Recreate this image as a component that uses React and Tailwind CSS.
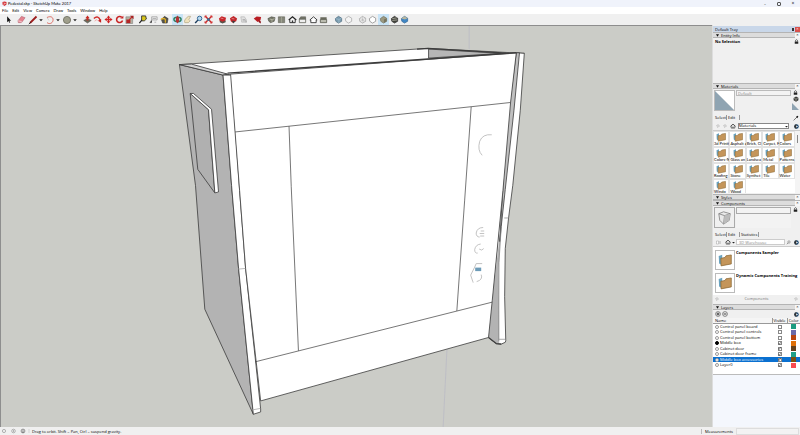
import { useState } from "react";

const menus = ["File", "Edit", "View", "Camera", "Draw", "Tools", "Window", "Help"];

const materials = [
  "3d Printi", "Asphalt a", "Brick, Cl", "Carpet, F", "Colors",
  "Colors-N", "Glass an", "Landsca", "Metal", "Patterns",
  "Roofing", "Stone", "Synthet", "Tile", "Water",
  "Windo", "Wood",
];

const startLayers = [
  { name: "Control panel board", visible: false, color: "bg-[#1b9c80]" },
  { name: "Control panel controls", visible: false, color: "bg-[#6a6aa8]" },
  { name: "Control panel bottom", visible: false, color: "bg-[#b8440e]" },
  { name: "Middle box", visible: true, color: "bg-[#e07008]" },
  { name: "Cabinet door", visible: true, color: "bg-[#64401c]" },
  { name: "Cabinet door frame", visible: true, color: "bg-[#1ea088]" },
  { name: "Middle box accessories", visible: true, color: "bg-[#7c5010]" },
  { name: "Layer0", visible: true, color: "bg-[#fa4a50]" },
];

// every glyph is drawn on a 10x10 grid
const icons = {
  select: <path d="M3.500 1.500v6.500l1.500-1.300 1 2 .9-.5-1-1.900h1.900z" fill="#111" />,
  eraser: <><path d="M1 6.500L5 1.500l4 1.500L5 8.500 1.500 8.500z" fill="#e5838f" stroke="#a35a66" strokeWidth=".5" /><path d="M1 6.500l3.800.7v1.300" fill="none" stroke="#fff" strokeWidth=".6" /></>,
  pencil: <><path d="M2 8L8.500 1.500" stroke="#9c1c1c" strokeWidth="1.800" /><path d="M.8 9.200l2-2" stroke="#222" strokeWidth=".9" /></>,
  arc: <><path d="M2 2.500c4-2 6.500 0 6 3S4 9.500 2 7.500" fill="none" stroke="#dd6a60" strokeWidth="1" /><path d="M2 2.500l2 3" stroke="#bbb" strokeWidth=".6" /></>,
  circle: <circle cx="5" cy="5" r="3.600" fill="#a09f8c" stroke="#6a6a5c" strokeWidth=".8" />,
  push: <><path d="M.8 6l4.200-2L9.200 6 5 9z" fill="#6d6b5a" stroke="#444" strokeWidth=".5" /><path d="M5 .6L2.600 3.500H4V6h2V3.500h1.400z" fill="#c82a22" /></>,
  follow: <><path d="M1 4c3-3 6-2 7 2" fill="none" stroke="#d02a28" strokeWidth="1.600" /><path d="M9 8.500L5.500 6.500 9 4.500z" fill="#c51f1f" /><path d="M2 7c1-2 2-2 3-1" fill="none" stroke="#e88" strokeWidth=".8" /></>,
  move: <path d="M5 .5L3 3h1.200v1.200H3V3L.5 5 3 7V5.800h1.200V7H3l2 2.500L7 7H5.800V5.800H7V7l2.500-2L7 3v1.200H5.800V3H7z" fill="#cf2323" />,
  rotate: <><path d="M7.500 2.500A3.400 3.400 0 1 0 8.400 6" fill="none" stroke="#c92323" strokeWidth="1.700" /><path d="M5.800 4L9.300 4V.8z" fill="#c92323" /></>,
  scale: <><path d="M1 2h7.500v7.500H1z" fill="#b5b2a2" stroke="#777" strokeWidth=".6" /><path d="M1.500 9h4.500V5h-4.500z" fill="#b32626" /><path d="M4.500 5.500L8 2" stroke="#c22" strokeWidth="1.200" /><path d="M5.500.8h4v4z" fill="#a52222" /></>,
  tape: <><path d="M4 1h4.500l.8 3.500-2.300 2H4z" fill="#d8c61c" stroke="#222" strokeWidth=".9" /><path d="M4.500 5.500L1.500 9" stroke="#222" strokeWidth="1.400" /></>,
  text: <><path d="M3 2h6v3.500H3z" fill="#f2f2f2" stroke="#777" strokeWidth=".6" /><path d="M4 3.800h4M3 5.500L1 8.500h2M6 8h2" stroke="#777" strokeWidth=".6" /></>,
  paint: <><path d="M1.500 5l3.500-3.500L9 4 8 9H3z" fill="#55544c" stroke="#333" strokeWidth=".6" /><path d="M1 5c2-1.500 4-1.500 5 0v3.500" fill="none" stroke="#dbac26" strokeWidth="1.500" /></>,
  orbit: <><ellipse cx="5" cy="5" rx="4" ry="2.400" fill="none" stroke="#2b8063" strokeWidth="1.600" /><path d="M5 .5L3.200 3v4L5 9.500 6.800 7V3z" fill="#b03335" /></>,
  hand: <path d="M2 8.500C1 6 2.500 5 4 3l2-1.500h2.500L6.500 5 8 6.500 6 8.500z" fill="#efe2bd" stroke="#a99d79" strokeWidth=".7" />,
  zoom: <><circle cx="6.200" cy="3.800" r="2.500" fill="#b8d8ee" stroke="#356a98" strokeWidth="1.100" /><path d="M4.300 5.700L1.300 9" stroke="#1c3c5c" strokeWidth="1.600" /></>,
  extents: <><path d="M1.500 1.500l7 7M8.500 1.500l-7 7" stroke="#cf2525" strokeWidth="1.600" /><circle cx="5" cy="5" r="1.700" fill="#3f6f92" /><path d="M1 3V1h2M7 1h2v2M9 7v2H7M3 9H1V7" fill="none" stroke="#cf2525" strokeWidth=".8" /></>,
  warehouse: <><path d="M1 4l3-2.500L9 3 8 7 5 9 2 7z" fill="#c7262a" /><path d="M2 6l3 1.500L8.500 6v2L5 9.400 2 8z" fill="#57544b" /><path d="M3 3.500l3 .5" stroke="#e99" strokeWidth=".8" /></>,
  extension: <><path d="M1 3.500L5 1.200 9 4 8 7 4 8.500 2 7z" fill="#c0262a" /><path d="M3 6.500L7 7l-2 2.400z" fill="#3f3f3f" /><path d="M3 4l3 .3" stroke="#f1b6b6" strokeWidth=".7" /></>,
  layout: <><path d="M2 2h4l2 3v3H3z" fill="#e1e1e1" stroke="#aaa" strokeWidth=".6" /><path d="M4 5h3M4 6.500h4v2" fill="none" stroke="#999" strokeWidth=".7" /></>,
  ruby: <><path d="M.8 4l3.200-2.200 5 .5L8.200 6 5 7.800z" fill="#b91d23" /><path d="M6 6l2.700 1v2.400L6.500 8z" fill="#8e1318" /></>,
  iso: <><path d="M1 4l4-2 4 1-1 4-4 1.500L2 7z" fill="#77796a" stroke="#414238" strokeWidth=".6" /><path d="M3 4.500l3 .7L8.500 4M5.500 5v3" fill="none" stroke="#d9d9c8" strokeWidth=".6" /></>,
  top: <><path d="M1.500 2h7v6.500h-7z" fill="#85877a" stroke="#555649" strokeWidth=".6" /><path d="M5 2v6.500" stroke="#b9baa8" strokeWidth=".6" /></>,
  house: <><path d="M2 5v3.500h6V5" fill="#fff" stroke="#222" strokeWidth="1" /><path d="M.8 5.500L5 2l4.200 3.500" fill="none" stroke="#222" strokeWidth="1.300" /><path d="M4.200 6h1.600v2.500H4.200z" fill="#333" /></>,
  side: <><path d="M1.500 4.500h7v4h-7z" fill="#eee" stroke="#55564c" strokeWidth=".8" /><path d="M1.500 4.500L3 2h5.500v2.500z" fill="#77786c" stroke="#44453c" strokeWidth=".5" /></>,
  back: <path d="M2 8.500V5.500H1L5 2l4 3.500H8v3z" fill="#fff" stroke="#333" strokeWidth="1" />,
  left: <><path d="M1.500 5h7v3.500h-7z" fill="#bbbcb0" stroke="#4b4c42" strokeWidth=".8" /><path d="M1.500 2.500h7V5h-7z" fill="#696a5c" /></>,
  xray: <><path d="M1.500 4L5 1.500l3.500 2v3.500L5 9 2 7z" fill="#7c9db0" stroke="#4e6c80" strokeWidth=".8" /><path d="M2 4l3.500 1 3-1.500M5.500 5v4" fill="none" stroke="#b6d0df" strokeWidth=".5" /></>,
  edges: <path d="M1.500 4L5 1.500l3.500 2v3.500L5 9 2 7z" fill="#f4f4f4" stroke="#a4a4a4" strokeWidth=".8" />,
  wire: <><path d="M1.500 4L5 1.500l3.500 2v3.500L5 9 2 7z" fill="none" stroke="#9a9a9a" strokeWidth=".7" /><path d="M2 4l3.500 1 3-1.500M5.500 5v4M5 1.500V6L2 7M5 6l3.500 1" fill="none" stroke="#aaa" strokeWidth=".5" /></>,
  hidden: <path d="M1.500 4L5 1.500l3.500 2v3.500L5 9 2 7z" fill="#fff" stroke="#858585" strokeWidth=".8" />,
  shaded: <><path d="M1.500 4L5 1.500l3.500 2v3.500L5 9 2 7z" fill="#9c9a82" stroke="#6e6d5a" strokeWidth=".7" /><path d="M5.500 5l3-1.500v3.500L5.500 9z" fill="#77755f" /></>,
  textured: <><path d="M1.500 4L5 1.500l3.500 2v3.500L5 9 2 7z" fill="#41423b" stroke="#222" strokeWidth=".7" /><path d="M2.500 4l5-.8M2.500 6l5.500-.5" stroke="#c3c3b5" strokeWidth=".8" /></>,
  mono: <><path d="M1.500 4L5 1.500l3.500 2v3.500L5 9 2 7z" fill="#3f86c4" stroke="#285c8c" strokeWidth=".7" /><path d="M1.500 4L5 1.500l3.500 2L5.500 5z" fill="#b9b79e" /></>,
  caret: <path d="M.5 3h9L5 8z" fill="#222" />,
  lock: <><path d="M1.500 5h7v4.500h-7z" fill="#222" /><path d="M3 5V2.800q2-3 4 0V5" fill="none" stroke="#333" strokeWidth="1.400" /></>,
  cube: <><path d="M1 3.500L5 1l4 2v4L5 9.500 1 7z" fill="#3a3b38" /><path d="M2 4l3 1 3-1.200M5 5v3.500" fill="none" stroke="#d5d5cc" strokeWidth=".8" /></>,
  dropper: <><path d="M1 9l5-5" stroke="#555" strokeWidth="1.300" /><path d="M5 3.500l2-2.300 2 1.500L7 5.500z" fill="#111" /></>,
  detail: <><circle cx="5" cy="5" r="4.500" fill="#1d4a73" /><path d="M5 .5a4.500 4.500 0 0 0 0 9z" fill="#333" /><path d="M4.500 3L8 5 4.500 7z" fill="#fff" /></>,
  back1: <path d="M5 1.500L1.500 5 5 8.500 8.500 5z" fill="none" stroke="#888" strokeWidth="1.200" />,
  search: <><circle cx="6" cy="4" r="2.400" fill="none" stroke="#555" strokeWidth=".9" /><path d="M4.300 5.700L1.800 8.500" stroke="#555" strokeWidth="1.200" /></>,
  list: <path d="M1 2h4v6H1zM6.500 3h3M6.500 5h3M6.500 7h3" fill="#fff" stroke="#888" strokeWidth=".8" />,
  plus: <><circle cx="5" cy="5" r="4" fill="#eee" stroke="#444" strokeWidth="1" /><path d="M5 2.800v4.400M2.800 5h4.400" stroke="#222" strokeWidth="1.400" /></>,
  minus: <><circle cx="5" cy="5" r="4" fill="#eee" stroke="#444" strokeWidth="1" /><path d="M2.800 5h4.400" stroke="#222" strokeWidth="1.400" /></>,
  folder: <><path d="M.5 2.200l2.500-.9V3L2.500 8.500.8 7.500z" fill="#6aa3c0" /><path d="M2 3.800l3-.6.7-1.200L9.500 1.400v6.400L2.200 9.200z" fill="#c4955a" stroke="#86642f" strokeWidth=".5" /></>,
};

function Icon({ name, className = "size-2.5" }) {
  return <svg viewBox="0 0 10 10" className={`${className} shrink-0`} aria-hidden="true">{icons[name]}</svg>;
}

function ToolGroup({ names, active, width, className = "" }) {
  return (
    <div className={`flex shrink-0 ${width} ${className}`}>
      {names.map((n) => (
        <button key={n} aria-label={n} className={`flex flex-1 h-[11px] min-w-0 items-center justify-center ${n === active ? "bg-[#c9e4f6]" : ""}`}>
          <Icon name={n} className="size-[9px]" />
        </button>
      ))}
    </div>
  );
}

function CaretTool({ name }) {
  return (
    <div className="flex items-center shrink-0 w-[17px] gap-px">
      <button aria-label={name}><Icon name={name} className="size-[10px]" /></button>
      <button aria-label={`${name} options`}><Icon name="caret" className="size-[4px]" /></button>
    </div>
  );
}

function PanelHeader({ title }) {
  return (
    <div className="flex items-center shrink-0 h-[6px] pl-[3px] border-y border-[#b4b4b4] bg-[#dcdcdc]">
      <button className="flex items-center flex-1 gap-0.5 text-left">
        <svg viewBox="0 0 10 10" className="size-[3px]" aria-hidden="true"><path d="M0 1h10L5 9z" fill="#111" /></svg>
        {title}
      </button>
      <button aria-label={`Close ${title}`} className="w-[5px] h-[5px] bg-[#f6f6f6] text-center leading-[4px]">×</button>
    </div>
  );
}

function Tabs({ names }) {
  return (
    <div className="flex items-center shrink-0 h-[7px] pl-0.5">
      {names.map((n, i) => (
        <button key={n} className={`pr-px mr-px border-r border-[#999] text-left ${i < 2 ? "w-[12px]" : ""}`}>{n}</button>
      ))}
    </div>
  );
}

function Cabinet() {
  return (
    <svg viewBox="1 26 710 400" className="w-full h-full" preserveAspectRatio="xMinYMin slice" role="img" aria-label="Pedestal model">
      <path d="M468 26v23M446 345l-4 82" stroke="#b5b6c4" strokeWidth=".6" />
      <g stroke="#3c3c3c" strokeWidth=".8" strokeLinejoin="round">
        {/* open top */}
        <path d="M179 64.500L416 49l11-.6L523 53.300 231 75z" fill="#fff" />
        <path d="M427.500 49v9L500 53.300z" fill="#b6b6b6" />
        <path d="M416 49l11-.6L505 53" fill="none" strokeWidth="1.300" />
        {/* left side */}
        <path d="M179 64.500L222.500 75 231 185l7 83 14.700 145.300L204.300 308.500 195 185z" fill="#b3b3b3" />
        <path d="M179 64.500l12-.5 36 10-4.500 1z" fill="#d2d2d2" />
        <path d="M222.500 75h8.500L239 190l6 78 10 93 5 47v3l-7.300 2.300L238 268l-7-83z" fill="#fff" />
        <path d="M238 268.500l7-.7M251.500 409l8-1.500" stroke="#aaa" />
        {/* side plate */}
        <path d="M189.700 93.300L208 109.500l6.300 83L197.300 169z" fill="#b0b0b0" />
        <path d="M189.700 93.300h3.300l18 15.700 7 82.500-3.700 1-6.300-83z" fill="#fff" />
        {/* right side */}
        <path d="M515 52.700l8 .6L519 110l-7.500 75-4.200 32.500L504 248l-.6 48 1.100 44-.5 1.500-4 1.800-5-.5-7.700-6L491 300l10-110z" fill="#fff" />
        <path d="M500 222l-2.500 45.500.5 74.500-3 .8-7.700-6.100 3.400-35z" fill="#b3b3b3" stroke="none" />
        <path d="M515 52.700h3.200L512.700 110 504 189l-4 37-1.500 15L505 130z" fill="#c0c0c0" />
        <path d="M500 226l-2.300 36-.2 78" fill="none" stroke="#888" />
        <path d="M503 217.500h4.300M497.500 338.500h6.500" stroke="#999" />
        {/* front */}
        <path d="M230 74l285-21.300-5.700 49.600L501.700 190 491 300l-3.700 36.700L260 400l-15-132-6-78z" fill="#fff" />
        <path d="M227 73L515 52.700" strokeWidth="1.400" />
        <path d="M234.500 131.700l274.800-29.400M254.500 361L490.800 301.500M288.300 126l2.200 60 7.200 164M470 106.700l-6.500 93-7.800 110.500" fill="none" strokeWidth=".7" />
        <path d="M487.300 336.700l7.700 6.100 5 .5" fill="none" strokeWidth="1.200" />
      </g>
      <g fill="none" stroke="#b4b4b4" strokeWidth=".8">
        <path d="M490.500 134.500q-9-1-12 6.500-2.500 9 2.500 14" />
        <path d="M482 227q-6 0-7 5.500 0 4 3.500 4M479.500 230.500h3.500M478.500 233h4.500M479 235.500h4" />
        <path d="M479.500 243.500q-5 .5-6 5.500 0 4 3 3.500M478 248.500l2.500 1 2-1.500" />
        <path d="M481 263h-6l-1.500 3.500M473.500 266.500l-4 8 2 6 .5 1.500M480 274q2 5-4.500 7" />
      </g>
      <path d="M474 267h6v3.500h-6z" fill="#6d9bb7" />
    </svg>
  );
}

export default function App() {
  const [layers, setLayers] = useState(startLayers);
  const [current, setCurrent] = useState("Middle box");

  const toggleLayer = (name) => {
    setLayers(layers.map((l) => (l.name === name ? { ...l, visible: !l.visible } : l)));
  };

  return (
    <div className="flex flex-col h-screen overflow-hidden bg-[#f0f0f0] font-['Open_Sans','Liberation_Sans',sans-serif] text-[4px] leading-[5px] text-black">
      {/* title bar */}
      <header className="flex items-center shrink-0 h-[7px] pl-0.5 bg-[#f0f3fb]">
        <svg viewBox="0 0 10 10" className="size-[5px] mr-px" aria-hidden="true">
          <path d="M1 2l4-1 4 1v5L5 10 1 7z" fill="#d32f35" /><path d="M3 4l4 1-4 2" fill="none" stroke="#fff" />
        </svg>
        <h1 className="flex-1 font-['Lato','Liberation_Sans',sans-serif]">Pedestal.skp - SketchUp Make 2017</h1>
        <button aria-label="Minimize" className="w-[14px] text-center">–</button>
        <button aria-label="Restore" className="flex w-[14px] justify-center"><span className="size-[4px] border border-[#555] rounded-[1px]" /></button>
        <button aria-label="Close" className="w-[14px] text-center text-[5px]">×</button>
      </header>

      <nav className="flex items-center shrink-0 h-[7px] pl-0.5 gap-[4px] bg-white font-['Lato','Liberation_Sans',sans-serif]">
        {menus.map((m) => <button key={m}>{m}</button>)}
      </nav>

      {/* toolbar */}
      <div className="flex items-center shrink-0 h-[11px] pl-[3px]">
        <ToolGroup names={["select"]} width="w-[10px]" />
        <ToolGroup names={["eraser"]} width="w-[10px]" className="ml-[3px] mr-[2px]" />
        <CaretTool name="pencil" />
        <CaretTool name="arc" />
        <CaretTool name="circle" />
        <ToolGroup names={["push", "follow", "move", "rotate", "scale"]} width="w-[53px]" className="ml-[3px]" />
        <ToolGroup names={["tape", "text", "paint"]} width="w-[33px]" className="ml-[2px]" />
        <ToolGroup names={["orbit", "hand", "zoom", "extents"]} active="orbit" width="w-[42px]" className="ml-[2px]" />
        <ToolGroup names={["warehouse", "extension", "layout"]} width="w-[32px]" className="ml-[3px]" />
        <ToolGroup names={["ruby"]} width="w-[10px]" className="ml-[3px]" />
        <ToolGroup names={["iso", "top", "house", "side", "back", "left"]} width="w-[63px]" className="ml-[4px]" />
        <ToolGroup names={["xray", "edges"]} width="w-[21px]" className="ml-[4px]" />
        <ToolGroup names={["wire", "hidden", "shaded", "textured", "mono"]} active="shaded" width="w-[53px]" className="ml-[3px]" />
      </div>

      <div className="flex flex-1 min-h-0">
        <main className="flex-1 min-w-0 border-t border-l border-[#8e8e8e] bg-[#cbccc7]">
          <Cabinet />
        </main>

        {/* tray */}
        <aside className="flex flex-col shrink-0 w-[88px] border-l border-[#ddd] overflow-hidden">
          <div className="flex items-center shrink-0 h-[6px] mt-px pl-0.5 bg-[#c9d7e9]">
            <h2 className="flex-1">Default Tray</h2>
            <button aria-label="Pin tray" className="w-[5px] text-center"><span className="block mx-auto w-[2px] h-[3px] bg-[#333]" /></button>
            <button aria-label="Close tray" className="w-[5px] h-[5px] bg-[#d9514c] text-white text-center leading-[4px]">×</button>
          </div>

          <PanelHeader title="Entity Info" />
          <section className="flex items-start justify-between shrink-0 h-[45px] pt-px pl-0.5">
            <span className="font-bold">No Selection</span>
            <Icon name="lock" className="size-[5px] mr-px" />
          </section>

          <PanelHeader title="Materials" />
          <section className="flex flex-col shrink-0">
            <div className="flex h-[24px] pl-px pt-px">
              <svg viewBox="0 0 20 20" className="size-[21px] border border-[#bbb]" aria-hidden="true">
                <path d="M0 0h20v20z" fill="#fff" /><path d="M0 0v20h20z" fill="#8fa4b2" />
              </svg>
              <div className="flex-1 pl-px">
                <input aria-label="Material name" defaultValue="Default" className="block w-full h-[6px] pl-px border border-[#bbb] bg-[#f3f3f3] text-[#888]" />
              </div>
              <div className="flex flex-col items-center w-[9px] gap-px">
                <Icon name="lock" className="size-[5px]" />
                <Icon name="cube" className="size-[6px]" />
                <svg viewBox="0 0 10 10" className="size-[7px]" aria-hidden="true"><path d="M0 0v10h10z" fill="#8fa4b2" /></svg>
              </div>
            </div>
            <div className="flex items-center justify-between pr-px h-[9px]">
              <Tabs names={["Select", "Edit"]} />
              <Icon name="dropper" className="size-[6px]" />
            </div>
            <div className="flex items-center h-[8px] pl-[3px] pr-px gap-0.5">
              <button aria-label="Back"><Icon name="back1" className="size-[4px]" /></button>
              <button aria-label="Forward" className="mx-px"><Icon name="back1" className="size-[4px]" /></button>
              <button aria-label="In model"><Icon name="house" className="size-[6px]" /></button>
              <div className="flex flex-1 items-center h-[6px] border border-[#888] bg-white">
                <select aria-label="Library" className="flex-1 h-[4px] leading-[4px] appearance-none">
                  <option>Materials</option>
                </select>
                <Icon name="caret" className="size-[3px]" />
              </div>
              <Icon name="detail" className="size-[5px] ml-[3px]" />
            </div>
            <div className="flex h-[63px] bg-white border-t border-[#ccc]">
              <ul className="grid grid-cols-5 auto-rows-[14px] gap-0.5 flex-1 px-px pt-px overflow-hidden">
                {materials.map((m) => (
                  <li key={m} className="flex flex-col items-center min-w-0 ring-1 ring-[#e2e2e2] bg-white">
                    <Icon name="folder" className="size-[10px]" />
                    <span className="w-full leading-[4px] whitespace-nowrap font-['Lato','Liberation_Sans',sans-serif]">{m}</span>
                  </li>
                ))}
              </ul>
              <div className="flex justify-center w-[5px] pt-1 bg-[#f4f4f4]"><span className="w-px h-2 bg-[#888]" /></div>
            </div>
          </section>

          <div className="shrink-0 h-px" />
          <PanelHeader title="Styles" />
          <PanelHeader title="Components" />
          <section className="flex flex-col shrink-0">
            <div className="flex h-[24px] pl-px pt-px">
              <svg viewBox="0 0 20 20" className="size-[21px] border border-[#aaa]" aria-hidden="true">
                <path d="M4 6l5-2 7 2-1 7-6 4-4-4z" fill="#e9e9e9" stroke="#777" strokeWidth=".8" />
                <path d="M4 6l6 2 6-2M10 8l-1 9" fill="none" stroke="#777" strokeWidth=".8" />
                <path d="M10 8l6-2-1 7-6 4z" fill="#bbb" />
              </svg>
              <div className="flex-1 pl-px">
                <input aria-label="Component name" className="block w-full h-[7px] border border-[#aaa] bg-[#f3f3f3]" />
                <input aria-label="Component description" className="block w-full h-[14px] bg-[#f3f3f3]" />
              </div>
              <div className="flex justify-center w-[9px]"><Icon name="lock" className="size-[5px]" /></div>
            </div>
            <div className="flex items-center h-[8px]"><Tabs names={["Select", "Edit", "Statistics"]} /></div>
            <div className="flex items-center h-[8px] pl-[3px] pr-px gap-px">
              <button aria-label="View options"><Icon name="list" className="size-[5px]" /></button>
              <button aria-label="In model" className="ml-[3px]"><Icon name="house" className="size-[6px]" /></button>
              <Icon name="caret" className="size-[3px]" />
              <input aria-label="Search warehouse" placeholder="3D Warehouse" className="flex-1 min-w-0 h-[6px] pl-0.5 border border-[#ccc] bg-white placeholder:text-[#888]" />
              <button aria-label="Search"><Icon name="search" className="size-[5px]" /></button>
              <Icon name="detail" className="size-[5px] ml-0.5" />
            </div>
            <ul className="flex flex-col gap-[3px] h-[49px] pl-0.5 pt-[3px] bg-white border-t border-[#ccc]">
              {["Components Sampler", "Dynamic Components Training"].map((c) => (
                <li key={c} className="flex gap-px font-bold">
                  <span className="flex items-center justify-center size-5 border border-[#bbb]"><Icon name="folder" className="size-[14px]" /></span>
                  {c}
                </li>
              ))}
            </ul>
            <div className="flex items-center justify-between h-[7px] px-0.5 text-[#777]">
              <button aria-label="Previous"><Icon name="back1" className="size-[4px]" /></button>
              Components
              <button aria-label="Next"><Icon name="back1" className="size-[4px]" /></button>
            </div>
          </section>

          <div className="shrink-0 h-[2px]" />
          <PanelHeader title="Layers" />
          <section className="shrink-0 h-[65px] border-b border-[#bbb] bg-white">
            <div className="flex items-center h-[8px] pl-0.5 pr-px gap-px bg-[#f0f0f0]">
              <button aria-label="Add layer"><Icon name="plus" className="size-[6px]" /></button>
              <button aria-label="Delete layer"><Icon name="minus" className="size-[6px]" /></button>
              <Icon name="detail" className="size-[5px] ml-auto" />
            </div>
            <table className="w-full h-[50px] table-fixed border-collapse">
              <thead className="bg-[#f5f5f5]">
                <tr>
                  <th className="p-0 pl-0.5 text-left font-normal border-b border-[#999]">Name</th>
                  <th className="w-[15px] p-0 font-normal border-b border-l border-[#999]">Visible</th>
                  <th className="w-[13px] p-0 font-normal border-b border-l border-[#999]">Color</th>
                </tr>
              </thead>
              <tbody className="leading-[4px]">
                {layers.map((l) => (
                  <tr key={l.name} className={l.name === "Middle box accessories" ? "bg-[#0a70d0] text-white" : ""}>
                    <td className="p-0 pl-0.5">
                      <label className="flex items-center gap-px whitespace-nowrap">
                        <input type="radio" name="layer" checked={current === l.name} onChange={() => setCurrent(l.name)}
                          className="appearance-none size-[4px] shrink-0 rounded-full border border-[#999] bg-white checked:border-black checked:bg-black" />
                        {l.name}
                      </label>
                    </td>
                    <td className="p-0">
                      <label className="flex items-center justify-center size-[4px] mx-auto border border-[#888] bg-white text-[#333] leading-[2px]">
                        <input type="checkbox" aria-label={`${l.name} visible`} checked={l.visible} onChange={() => toggleLayer(l.name)} className="sr-only" />
                        {l.visible && <svg viewBox="0 0 10 10" className="size-[3px] shrink-0" aria-hidden="true"><path d="M1 5l3 3 5-7" fill="none" stroke="#222" strokeWidth="2" /></svg>}
                      </label>
                    </td>
                    <td className="p-0"><span className={`block w-[5px] h-[5px] mx-auto ${l.color}`} /></td>
                  </tr>
                ))}
              </tbody>
            </table>
          </section>
          <div className="flex-1 bg-[#f4f7fd]" />
        </aside>
      </div>

      {/* status bar */}
      <footer className="flex items-center shrink-0 h-[8px] pl-0.5">
        <svg viewBox="0 0 30 8" className="w-[30px] h-[8px]" aria-hidden="true">
          <circle cx="2" cy="4" r="1.600" fill="none" stroke="#888" strokeWidth=".6" />
          <circle cx="11.500" cy="4" r="1.800" fill="none" stroke="#888" strokeWidth=".6" /><path d="M11.500 3v2" stroke="#888" strokeWidth=".6" />
          <circle cx="21" cy="4" r="1.900" fill="none" stroke="#555" strokeWidth=".6" /><path d="M20 5h2M20.500 3.300h1" stroke="#555" strokeWidth=".8" />
          <path d="M27 2v4" stroke="#bbb" strokeWidth=".5" />
        </svg>
        <p className="flex-1">Drag to orbit. Shift = Pan, Ctrl = suspend gravity.</p>
        <label htmlFor="measurements" className="pl-[3px] mr-[3px] border-l border-[#bbb]">Measurements</label>
        <input id="measurements" className="w-[63px] h-[7px] mr-px border border-[#ddd] bg-[#f3f3f3]" />
      </footer>
    </div>
  );
}
